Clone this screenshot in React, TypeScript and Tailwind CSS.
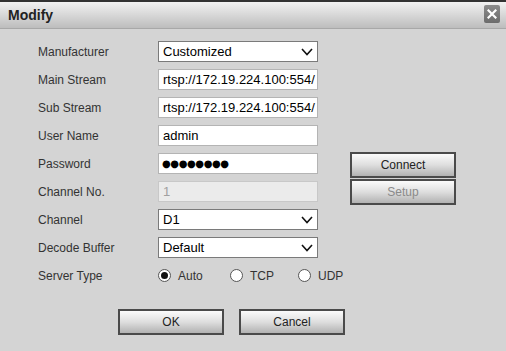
import React from 'react'

const font = { fontFamily: '"Liberation Sans", Arial, sans-serif' }

function Chevron() {
  return (
    <svg width="12" height="8" viewBox="0 0 12 8" className="absolute right-[4px] top-[6px]">
      <polyline points="1,1 6,6.5 11,1" fill="none" stroke="#111" strokeWidth="1.6" />
    </svg>
  )
}

function SelectBox({ value }: { value: string }) {
  return (
    <div className="relative h-[21px] w-[160px] shrink-0 border border-[#7a7a7a] bg-white pl-[4px] text-[13px] leading-[19px] text-black">
      {value}
      <Chevron />
    </div>
  )
}

function TextBox({ value, disabled }: { value: string; disabled?: boolean }) {
  return (
    <div
      className={
        disabled
          ? 'h-[21px] w-[160px] shrink-0 overflow-hidden whitespace-nowrap border border-[#c8c8c8] bg-[#ebebeb] pl-[4px] text-[13px] leading-[19px] text-[#a0a0a0]'
          : 'h-[21px] w-[160px] shrink-0 overflow-hidden whitespace-nowrap border border-[#b4b4b4] bg-white pl-[4px] text-[13px] leading-[19px] text-black'
      }
    >
      {value}
    </div>
  )
}

function GrayButton({ label, dim, className }: { label: string; dim?: boolean; className?: string }) {
  return (
    <button
      className={
        'h-[26px] w-[106px] shrink-0 border-2 border-[#4a4a4a] bg-gradient-to-b from-[#fbfbfb] via-[#dedede] to-[#b2b2b2] text-[12px] ' +
        (dim ? 'text-[#8a8a8a] ' : 'text-[#222] ') +
        (className ?? '')
      }
    >
      {label}
    </button>
  )
}

function Radio({ label, checked }: { label: string; checked?: boolean }) {
  return (
    <div className="flex items-center">
      <span className="flex h-[13px] w-[13px] items-center justify-center rounded-full border border-[#555] bg-white">
        {checked && <span className="h-[7px] w-[7px] rounded-full bg-[#111]" />}
      </span>
      <span className="ml-[7px] pt-[1px] text-[12px] text-[#333]">{label}</span>
    </div>
  )
}

function Row({ label, children, right }: { label: string; children: React.ReactNode; right?: React.ReactNode }) {
  return (
    <div className="flex h-[28px] items-center">
      <div className="w-[158px] shrink-0 pl-[38px] pt-[2px] text-[12px] text-[#333]">{label}</div>
      {children}
      {right}
    </div>
  )
}

export default function App() {
  return (
    <div className="h-[351px] w-[506px] overflow-hidden bg-[#d4d4d4]" style={font}>
      {/* title bar */}
      <div className="h-[2px] bg-[#333]" />
      <div className="relative flex h-[27px] items-center border-b border-[#a8a8a8] bg-gradient-to-b from-[#f2f2f2] to-[#bdbdbd] pl-[8px]">
        <span className="text-[14px] font-bold text-[#222]">Modify</span>
        <div className="absolute right-[6px] top-[3px] flex h-[18px] w-[16px] items-center justify-center rounded-[2px] bg-gradient-to-b from-[#8c8c8c] to-[#6c6c6c]">
          <svg width="10" height="10" viewBox="0 0 10 10">
            <path d="M1.5 1.5 L8.5 8.5 M8.5 1.5 L1.5 8.5" stroke="#fff" strokeWidth="2.2" strokeLinecap="square" />
          </svg>
        </div>
      </div>

      {/* form */}
      <div className="pt-[8px]">
        <Row label="Manufacturer">
          <SelectBox value="Customized" />
        </Row>
        <Row label="Main Stream">
          <TextBox value="rtsp://172.19.224.100:554/" />
        </Row>
        <Row label="Sub Stream">
          <TextBox value="rtsp://172.19.224.100:554/" />
        </Row>
        <Row label="User Name">
          <TextBox value="admin" />
        </Row>
        <Row label="Password" right={<GrayButton label="Connect" className="ml-[32px] mt-[3px] h-[25px]" />}>
          <div className="h-[21px] w-[160px] shrink-0 border border-[#b4b4b4] bg-white pl-[3px] text-[10px] leading-[19px] tracking-[-0.4px] text-black" style={{ fontFamily: '"DejaVu Sans", sans-serif' }}>
            ●●●●●●●●
          </div>
        </Row>
        <Row label="Channel No." right={<GrayButton label="Setup" dim className="ml-[32px] mt-[2px] h-[25px]" />}>
          <TextBox value="1" disabled />
        </Row>
        <Row label="Channel">
          <SelectBox value="D1" />
        </Row>
        <Row label="Decode Buffer">
          <SelectBox value="Default" />
        </Row>
        <Row label="Server Type">
          <div className="flex">
            <div className="w-[72px]">
              <Radio label="Auto" checked />
            </div>
            <div className="w-[68px]">
              <Radio label="TCP" />
            </div>
            <Radio label="UDP" />
          </div>
        </Row>

        <div className="mt-[20px] flex pl-[118px]">
          <GrayButton label="OK" />
          <GrayButton label="Cancel" className="ml-[15px]" />
        </div>
      </div>
    </div>
  )
}
